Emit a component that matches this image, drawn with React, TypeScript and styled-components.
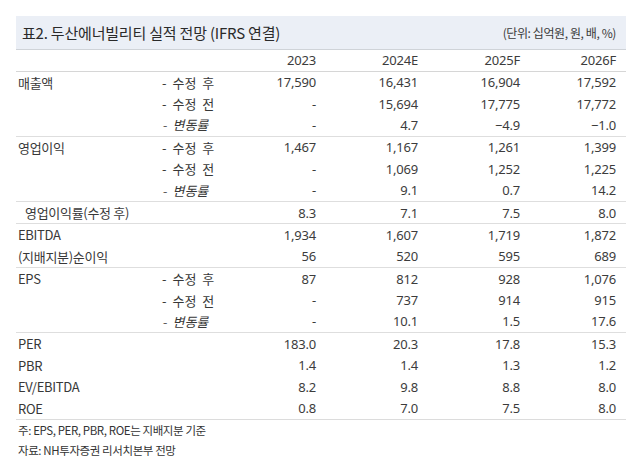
import React from "react";
import styled, { createGlobalStyle } from "styled-components";

const Global = createGlobalStyle`
  html, body { margin: 0; padding: 0; background: #ffffff; }
  body { font-family: "Noto Sans", "Noto Sans CJK KR", sans-serif; color: #333; }
`;

const Page = styled.div`
  width: 639px;
  height: 459px;
  padding: 16px 13px 0 16px;
  box-sizing: border-box;
`;

const TitleBar = styled.div`
  height: 33px;
  background: #ebeff6;
  border-bottom: 1.5px solid #cfd3d8;
  display: flex;
  align-items: center;
  justify-content: space-between;
  padding: 0 10px 0 6px;
`;

const Title = styled.div`
  font-family: "Noto Sans CJK KR", sans-serif;
  font-size: 15px;
  font-weight: 400;
  letter-spacing: -0.2px;
  color: #2a2a2a;
`;

const Unit = styled.div`
  font-family: "Noto Sans CJK KR", sans-serif;
  font-size: 12px;
  letter-spacing: -0.4px;
  color: #3a3a3a;
`;

const COLS = "144px 76px 80px 102px 102px 96px";

const Row = styled.div<{ $header?: boolean }>`
  display: grid;
  grid-template-columns: ${COLS};
  padding-right: 10px;
  height: 21.4px;
  align-items: center;
  font-size: 13px;
  color: #333;
  ${(p) => (p.$header ? "border-bottom: 1.5px solid #d6d6d6; height: 20.5px;" : "")}
`;

const Group = styled.div<{ $first?: boolean }>`
  border-top: ${(p) => (p.$first ? "none" : "1.5px solid #dedede")};
`;

const Label = styled.div<{ $indent?: boolean }>`
  font-family: "Noto Sans CJK KR", "Noto Sans", sans-serif;
  font-size: 13px;
  letter-spacing: -0.3px;
  padding-left: ${(p) => (p.$indent ? "9px" : "2px")};
  white-space: nowrap;
  color: #383838;
`;

const Sub = styled.div<{ $italic?: boolean }>`
  font-family: "Noto Sans CJK KR", sans-serif;
  font-size: 13px;
  padding-left: 2px;
  white-space: nowrap;
  word-spacing: 3px;
  font-style: ${(p) => (p.$italic ? "italic" : "normal")};
  color: #383838;
`;

const Num = styled.div`
  text-align: right;
  font-family: "Noto Sans", sans-serif;
  font-size: 13px;
  letter-spacing: -0.2px;
  color: #3c3c3c;
`;

const BottomLine = styled.div`
  border-top: 1.5px solid #dcdcdc;
`;

const Notes = styled.div`
  padding: 0 0 0 2px;
  font-family: "Noto Sans CJK KR", sans-serif;
  font-size: 11.5px;
  letter-spacing: -0.4px;
  color: #333;
  line-height: 20px;
`;

type R = { label?: string; indent?: boolean; sub?: string; italic?: boolean; v: string[] };

const groups: R[][] = [
  [
    { label: "매출액", sub: "- 수정 후", v: ["17,590", "16,431", "16,904", "17,592"] },
    { sub: "- 수정 전", v: ["-", "15,694", "17,775", "17,772"] },
    { sub: "- 변동률", italic: true, v: ["-", "4.7", "-4.9", "-1.0"] },
  ],
  [
    { label: "영업이익", sub: "- 수정 후", v: ["1,467", "1,167", "1,261", "1,399"] },
    { sub: "- 수정 전", v: ["-", "1,069", "1,252", "1,225"] },
    { sub: "- 변동률", italic: true, v: ["-", "9.1", "0.7", "14.2"] },
  ],
  [{ label: "영업이익률(수정 후)", indent: true, v: ["8.3", "7.1", "7.5", "8.0"] }],
  [
    { label: "EBITDA", v: ["1,934", "1,607", "1,719", "1,872"] },
    { label: "(지배지분)순이익", v: ["56", "520", "595", "689"] },
  ],
  [
    { label: "EPS", sub: "- 수정 후", v: ["87", "812", "928", "1,076"] },
    { sub: "- 수정 전", v: ["-", "737", "914", "915"] },
    { sub: "- 변동률", italic: true, v: ["-", "10.1", "1.5", "17.6"] },
  ],
  [
    { label: "PER", v: ["183.0", "20.3", "17.8", "15.3"] },
    { label: "PBR", v: ["1.4", "1.4", "1.3", "1.2"] },
    { label: "EV/EBITDA", v: ["8.2", "9.8", "8.8", "8.0"] },
    { label: "ROE", v: ["0.8", "7.0", "7.5", "8.0"] },
  ],
];

const fmt = (s: string) => (s.startsWith("-") && s.length > 1 ? "\u2212" + s.slice(1) : s === "-" ? "-" : s);

export default function App() {
  return (
    <>
      <Global />
      <Page>
        <TitleBar>
          <Title>표2. 두산에너빌리티 실적 전망 (IFRS 연결)</Title>
          <Unit>(단위: 십억원, 원, 배, %)</Unit>
        </TitleBar>
        <Row $header>
          <div />
          <div />
          <Num>2023</Num>
          <Num>2024E</Num>
          <Num>2025F</Num>
          <Num>2026F</Num>
        </Row>
        {groups.map((g, gi) => (
          <Group key={gi} $first={gi === 0}>
            {g.map((r, ri) => (
              <Row key={ri}>
                <Label $indent={r.indent}>{r.label ?? ""}</Label>
                <Sub $italic={r.italic}>{r.sub ?? ""}</Sub>
                {r.v.map((x, i) => (
                  <Num key={i}>{fmt(x)}</Num>
                ))}
              </Row>
            ))}
          </Group>
        ))}
        <BottomLine />
        <Notes>
          <div>주: EPS, PER, PBR, ROE는 지배지분 기준</div>
          <div>자료: NH투자증권 리서치본부 전망</div>
        </Notes>
      </Page>
    </>
  );
}
